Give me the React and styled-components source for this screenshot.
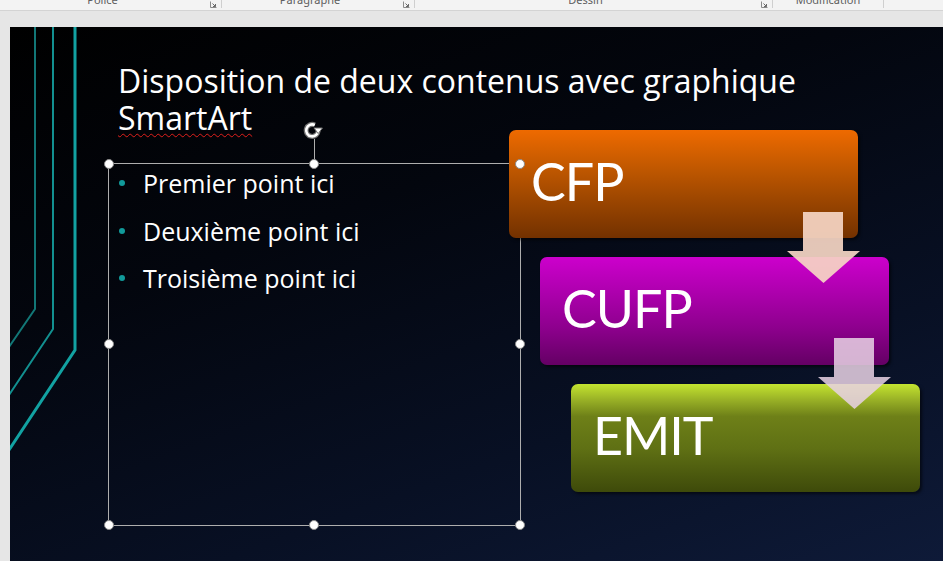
import React from 'react'
import styled, { createGlobalStyle } from 'styled-components'

const GlobalStyle = createGlobalStyle`
  html, body {
    margin: 0;
    padding: 0;
    background: #e6e6e6;
    overflow: hidden;
  }
`

const ribbonGroups = [
  { label: 'Police', width: 222, launcher: true },
  { label: 'Paragraphe', width: 193, launcher: true },
  { label: 'Dessin', width: 358, launcher: true },
  { label: 'Modification', width: 111, launcher: false },
]

const bullets = ['Premier point ici', 'Deuxième point ici', 'Troisième point ici']

const steps = [
  { text: 'CFP', tone: 'orange' },
  { text: 'CUFP', tone: 'magenta' },
  { text: 'EMIT', tone: 'olive' },
]

function Launcher() {
  return (
    <svg width="7" height="7" viewBox="0 0 7 7">
      <path d="M0.5 0.5 V6.5 H6.5" fill="none" stroke="#8a8a8a" strokeWidth="1" />
      <path d="M2.5 2.5 L5.5 5.5 M5.5 3 V5.5 H3" fill="none" stroke="#6a6a6a" strokeWidth="1" />
    </svg>
  )
}

function RotateIcon() {
  const arc = 'M15.2 9.5 A6 6 0 1 1 11.8 4'
  return (
    <svg width="20" height="18" viewBox="0 0 20 18">
      <path d={arc} fill="none" stroke="#707070" strokeWidth="5" />
      <path d={arc} fill="none" stroke="#ffffff" strokeWidth="2.6" />
      <path d="M11 7 L19.4 7 L15.2 12.6 Z" fill="#ffffff" stroke="#707070" strokeWidth="1" />
    </svg>
  )
}

function CircuitLines() {
  return (
    <svg width="80" height="430" viewBox="0 0 80 430">
      <polyline points="25,0 25,282 -1,320" fill="none" stroke="#127777" strokeWidth="2" />
      <polyline points="43,0 43,302 -1,368" fill="none" stroke="#129090" strokeWidth="2" />
      <polyline points="65,0 65,323 -1,423" fill="none" stroke="#12a2a2" strokeWidth="3" />
    </svg>
  )
}

function Arrow({ fill }) {
  return (
    <svg width="73" height="71" viewBox="0 0 73 71">
      <polygon points="16,0 56,0 56,39 73,39 36.5,71 0,39 16,39" fill={fill} />
    </svg>
  )
}

function App() {
  return (
    <Page>
      <GlobalStyle />
      <Ribbon>
        {ribbonGroups.map((g) => (
          <RibbonGroup key={g.label} $width={g.width}>
            <GroupLabel>{g.label}</GroupLabel>
            {g.launcher && (
              <LauncherSlot>
                <Launcher />
              </LauncherSlot>
            )}
          </RibbonGroup>
        ))}
      </Ribbon>

      <Workspace>
        <Slide>
          <Decoration>
            <CircuitLines />
          </Decoration>

          <Title>
            Disposition de deux contenus avec graphique
            <br />
            <Misspelled>SmartArt</Misspelled>
          </Title>

          <Body>
            <TextBox>
              <RotateHandle>
                <RotateIcon />
              </RotateHandle>
              <Handle $x="0%" $y="0%" />
              <Handle $x="50%" $y="0%" />
              <Handle $x="100%" $y="0%" />
              <Handle $x="0%" $y="50%" />
              <Handle $x="100%" $y="50%" />
              <Handle $x="0%" $y="100%" />
              <Handle $x="50%" $y="100%" />
              <Handle $x="100%" $y="100%" />

              <BulletList>
                {bullets.map((b) => (
                  <BulletItem key={b}>{b}</BulletItem>
                ))}
              </BulletList>
            </TextBox>

            <SmartArt>
              {steps.map((s, i) => (
                <StepBox key={s.text} $tone={s.tone} $indent={i * 31}>
                  {s.text}
                </StepBox>
              ))}
              <ArrowSpot $left={278} $top={82}>
                <Arrow fill="rgba(246, 214, 196, 0.92)" />
              </ArrowSpot>
              <ArrowSpot $left={309} $top={208}>
                <Arrow fill="rgba(232, 210, 228, 0.86)" />
              </ArrowSpot>
            </SmartArt>
          </Body>
        </Slide>
      </Workspace>
    </Page>
  )
}

const tones = {
  orange: 'linear-gradient(180deg, #ee6a00 0%, #c15800 35%, #9c4600 65%, #733100 100%)',
  magenta: 'linear-gradient(180deg, #cc00cc 0%, #b000b0 30%, #8e008e 65%, #640064 100%)',
  olive:
    'linear-gradient(180deg, #c4e430 0%, #98b026 15%, #6e8018 30%, #5f7014 60%, #3e4a0a 100%)',
}

const Page = styled.div`
  width: 943px;
  height: 561px;
  display: flex;
  flex-direction: column;
  overflow: hidden;
  font-family: 'Open Sans', 'Noto Sans', sans-serif;
`

const Ribbon = styled.div`
  height: 10px;
  flex: none;
  display: flex;
  background: #f3f3f3;
  border-bottom: 1px solid #d4d4d4;
  overflow: hidden;
`

const RibbonGroup = styled.div`
  width: ${(p) => p.$width}px;
  flex: none;
  display: flex;
  border-right: 1px solid #cfcfcf;
  box-sizing: border-box;
  height: 8px;
`

const GroupLabel = styled.div`
  flex: 1;
  text-align: center;
  font-family: 'Noto Sans', sans-serif;
  font-size: 11px;
  line-height: 12px;
  margin-top: -6px;
  color: #5e5e5e;
`

const LauncherSlot = styled.div`
  width: 16px;
  display: flex;
  justify-content: center;
  padding-top: 1px;
`

const Workspace = styled.div`
  flex: 1;
  display: flex;
  padding: 16px 0 0 10px;
  min-height: 0;
`

const Slide = styled.div`
  flex: 1;
  position: relative;
  overflow: hidden;
  background: linear-gradient(160deg, #000000 0%, #03060e 35%, #081024 70%, #0e1a38 100%);
  padding-top: 35px;
`

const Decoration = styled.div`
  position: absolute;
  left: 0;
  top: 0;
  line-height: 0;
`

const Title = styled.h1`
  position: relative;
  margin: 0 0 0 108px;
  font-size: 32px;
  line-height: 37px;
  font-weight: 400;
  color: #ffffff;
`

const Misspelled = styled.span`
  text-decoration: underline wavy #e0201c;
  text-decoration-thickness: 1px;
  text-underline-offset: 3px;
`

const Body = styled.div`
  display: flex;
  align-items: flex-start;
  margin-top: 27px;
`

const TextBox = styled.div`
  position: relative;
  width: 413px;
  height: 363px;
  box-sizing: border-box;
  margin-left: 98px;
  border: 1px solid #aeaeae;
  flex: none;
`

const Handle = styled.span`
  position: absolute;
  left: ${(p) => p.$x};
  top: ${(p) => p.$y};
  width: 10px;
  height: 10px;
  margin: -5.5px 0 0 -5.5px;
  box-sizing: border-box;
  border-radius: 50%;
  background: #ffffff;
  border: 1.5px solid #8c8c8c;
  z-index: 2;
`

const RotateHandle = styled.div`
  position: absolute;
  left: 50%;
  top: -43px;
  width: 20px;
  margin-left: -12px;
  display: flex;
  flex-direction: column;
  align-items: center;
  line-height: 0;

  &::after {
    content: '';
    width: 1px;
    height: 24px;
    background: #aeaeae;
    margin-left: 4px;
  }
`

const BulletList = styled.ul`
  list-style: none;
  margin: 0;
  padding: 3px 0 0 34px;
`

const BulletItem = styled.li`
  position: relative;
  font-size: 25px;
  line-height: 32px;
  margin-bottom: 15.5px;
  color: #ffffff;

  &::before {
    content: '';
    position: absolute;
    left: -24px;
    top: 13px;
    width: 6px;
    height: 6px;
    border-radius: 50%;
    background: #119a9a;
  }
`

const SmartArt = styled.div`
  position: relative;
  display: flex;
  flex-direction: column;
  gap: 19px;
  margin: -33px 0 0 -12px;
`

const StepBox = styled.div`
  width: 349px;
  height: 108px;
  margin-left: ${(p) => p.$indent}px;
  box-sizing: border-box;
  display: flex;
  align-items: center;
  padding: 0 0 6px 22px;
  border-radius: 7px;
  background: ${(p) => tones[p.$tone]};
  box-shadow: 2px 2px 3px rgba(0, 0, 0, 0.55);
  color: #ffffff;
  font-family: Lato, 'Open Sans', sans-serif;
  font-size: 52px;
  letter-spacing: -1px;
`

const ArrowSpot = styled.div`
  position: absolute;
  left: ${(p) => p.$left}px;
  top: ${(p) => p.$top}px;
  line-height: 0;
`

export default App
